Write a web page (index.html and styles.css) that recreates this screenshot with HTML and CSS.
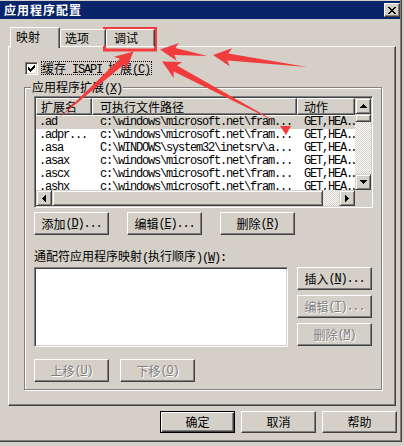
FILE: index.html
```html
<!DOCTYPE html>
<html>
<head>
<meta charset="utf-8">
<link rel="stylesheet" href="styles.css">
</head>
<body>
<div class="window">
  <div class="titlebar">
    <span class="title">应用程序配置</span>
    <span class="close"><svg width="8" height="7" viewBox="0 0 8 7" shape-rendering="crispEdges"><path d="M0 0h2v1H0zM6 0h2v1H6zM1 1h2v1H1zM5 1h2v1H5zM2 2h4v1H2zM3 3h2v1H3zM2 4h4v1H2zM1 5h2v1H1zM5 5h2v1H5zM0 6h2v1H0zM6 6h2v1H6z"/></svg></span>
  </div>
  <div class="client">
    <div class="tabs">
      <div class="tab sel">映射</div>
      <div class="tab t2">选项</div>
      <div class="tab t3">调试</div>
    </div>
    <div class="panel">
      <div class="checkrow">
        <span class="cbox"><svg width="7" height="7" viewBox="0 0 7 7" shape-rendering="crispEdges"><path d="M6 0h1v1H6zM5 1h2v1H5zM0 2h1v1H0zM4 2h3v1H4zM0 3h2v1H0zM3 3h3v1H3zM0 4h5v1H0zM1 5h3v1H1zM2 6h1v1H2z"/></svg></span>
        <span class="focus">缓存<span class="m"> ISAPI </span>扩展<span class="m">(<u>C</u>)</span></span>
      </div>
      <div class="group">
        <div class="gtitle">应用程序扩展<span class="m">(<u>X</u>)</span></div>
        <div class="list">
          <div class="lmain">
            <div class="lhead">
              <div class="hc c1">扩展名</div>
              <div class="hc c2">可执行文件路径</div>
              <div class="hc c3">动作</div>
            </div>
            <div class="lrows">
              <div class="row sel"><span class="c1">.ad</span><span class="c2">c:\windows\microsoft.net\fram...</span><span class="c3">GET,HEA<span class="dots">..</span></span></div>
              <div class="row"><span class="c1">.adpr...</span><span class="c2">c:\windows\microsoft.net\fram...</span><span class="c3">GET,HEA<span class="dots">..</span></span></div>
              <div class="row"><span class="c1">.asa</span><span class="c2">C:\WINDOWS\system32\inetsrv\a...</span><span class="c3">GET,HEA<span class="dots">..</span></span></div>
              <div class="row"><span class="c1">.asax</span><span class="c2">c:\windows\microsoft.net\fram...</span><span class="c3">GET,HEA<span class="dots">..</span></span></div>
              <div class="row"><span class="c1">.ascx</span><span class="c2">c:\windows\microsoft.net\fram...</span><span class="c3">GET,HEA<span class="dots">..</span></span></div>
              <div class="row"><span class="c1">.ashx</span><span class="c2">c:\windows\microsoft.net\fram...</span><span class="c3">GET,HEA<span class="dots">..</span></span></div>
            </div>
          </div>
          <div class="vscroll">
            <div class="sb"><svg width="7" height="4" viewBox="0 0 7 4" shape-rendering="crispEdges"><path d="M3 0h1v1H3zM2 1h3v1H2zM1 2h5v1H1zM0 3h7v1H0z"/></svg></div>
            <div class="sb vthumb"></div>
            <div class="track"></div>
            <div class="sb"><svg width="7" height="4" viewBox="0 0 7 4" shape-rendering="crispEdges"><path d="M0 0h7v1H0zM1 1h5v1H1zM2 2h3v1H2zM3 3h1v1H3z"/></svg></div>
          </div>
          <div class="hscroll">
            <div class="sb"><svg width="4" height="7" viewBox="0 0 4 7" shape-rendering="crispEdges"><path d="M3 0h1v7H3zM2 1h1v5H2zM1 2h1v3H1zM0 3h1v1H0z"/></svg></div>
            <div class="sb hthumb"></div>
            <div class="track htrack"></div>
            <div class="sb"><svg width="4" height="7" viewBox="0 0 4 7" shape-rendering="crispEdges"><path d="M0 0h1v7H0zM1 1h1v5H1zM2 2h1v3H2zM3 3h1v1H3z"/></svg></div>
          </div>
          <div class="corner"></div>
        </div>
        <div class="btnrow">
          <div class="btn">添加<span class="m">(<u>D</u>)...</span></div>
          <div class="btn">编辑<span class="m">(<u>E</u>)...</span></div>
          <div class="btn">删除<span class="m">(<u>R</u>)</span></div>
        </div>
        <div class="wlabel">通配符应用程序映射<span class="m">(</span>执行顺序<span class="m">)(<u>W</u>):</span></div>
        <div class="wrow">
          <div class="wlist"></div>
          <div class="wbtns">
            <div class="btn">插入<span class="m">(<u>N</u>)...</span></div>
            <div class="btn dis">编辑<span class="m">(<u>T</u>)...</span></div>
            <div class="btn dis">删除<span class="m">(<u>M</u>)</span></div>
          </div>
        </div>
        <div class="btnrow2">
          <div class="btn dis">上移<span class="m">(<u>U</u>)</span></div>
          <div class="btn dis">下移<span class="m">(<u>O</u>)</span></div>
        </div>
      </div>
    </div>
    <div class="footer">
      <div class="btn big def">确定</div>
      <div class="btn big">取消</div>
      <div class="btn big">帮助</div>
    </div>
  </div>
</div>
<svg class="annot" width="404" height="446" viewBox="0 0 404 446">
  <rect x="104.5" y="28.5" width="51" height="21.5" fill="none" stroke="#f03c3c" stroke-width="3"/>
  <g fill="#f03c3c">
    <polygon transform="translate(160 49.5) rotate(187.7)" points="0,0 -18,-9 -15,-3.5 -48,0 -15,3.5 -18,9"/>
    <polygon transform="translate(213 55) rotate(187.3)" points="0,0 -18,-9 -15,-3.5 -95,0 -15,3.5 -18,9"/>
    <polygon transform="translate(162 61.5) rotate(207.9)" points="0,0 -18,-9 -15,-3.5 -132,0 -15,3.5 -18,9"/>
    <polygon points="280,126 291,126 286,135"/>
    <polygon transform="translate(133.5 51.5) rotate(-41.7)" points="0,0 -18,-9 -15,-3.5 -100,0 -15,3.5 -18,9"/>
  </g>
</svg>
</body>
</html>
```

FILE: styles.css
```css
* { box-sizing: border-box; margin: 0; padding: 0; }
body {
  margin: 0;
  width: 404px;
  height: 446px;
  position: relative;
  overflow: hidden;
  background: #d4d0c8;
  font-family: "Noto Sans CJK SC", "Liberation Sans", sans-serif;
  font-size: 12px;
  line-height: 14px;
  color: #000;
}
.m { font-family: "Liberation Mono", monospace; font-size: 12px; letter-spacing: -1.2px; }
u { text-decoration: underline; }

.window {
  width: 402px;
  height: 442px;
  padding-top: 1px;
  border-right: 1px solid #404040;
  border-bottom: 1px solid #404040;
  box-shadow: inset -1px -1px 0 #808080;
}
.titlebar {
  height: 18px;
  margin-right: 1px;
  background: #0a246a;
  display: flex;
  align-items: center;
  justify-content: space-between;
  padding-left: 4px;
}
.title { color: #fff; font-weight: bold; letter-spacing: 1px; }
.close {
  width: 16px;
  height: 14px;
  background: #d4d0c8;
  border: 1px solid;
  border-color: #fff #404040 #404040 #fff;
  box-shadow: inset -1px -1px 0 #808080;
  display: flex;
  align-items: center;
  justify-content: center;
}

.client { padding-left: 8px; }
.tabs {
  display: flex;
  align-items: flex-end;
  height: 19px;
  margin-top: 8px;
  padding-left: 2px;
  position: relative;
  z-index: 1;
}
.tab {
  height: 17px;
  background: #d4d0c8;
  border-left: 1px solid #fff;
  border-top: 1px solid #fff;
  border-right: 1px solid #404040;
  box-shadow: inset -1px 0 0 #808080;
  border-radius: 2px 2px 0 0;
  line-height: 15px;
  white-space: nowrap;
}
.tab.sel { width: 50px; height: 21px; margin-bottom: -2px; padding-left: 5px; line-height: 17px; }
.tab.t2 { width: 46px; padding-left: 4px; }
.tab.t3 { width: 49px; padding-left: 7px; }

.panel {
  width: 388px;
  height: 360px;
  border: 1px solid;
  border-color: #fff #404040 #404040 #fff;
  box-shadow: inset -1px -1px 0 #808080;
  padding: 14px 0 0 16px;
}
.checkrow { display: flex; align-items: center; height: 14px; }
.cbox {
  width: 13px;
  height: 13px;
  margin-right: 3px;
  background: #fff;
  border: 1px solid;
  border-color: #808080 #fff #fff #808080;
  box-shadow: inset 1px 1px 0 #404040, inset -1px -1px 0 #d4d0c8;
  display: flex;
  align-items: center;
  justify-content: center;
}
.focus {
  border: 1px dotted #000;
  height: 14px;
  line-height: 12px;
  padding-right: 1px;
  white-space: nowrap;
}

.group {
  margin: 12px 0 0 -1px;
  width: 358px;
  border: 1px solid #808080;
  box-shadow: 1px 1px 0 #fff, inset 1px 1px 0 #fff;
  padding: 0 0 7px 9px;
}
.gtitle {
  margin: -8px 0 0 -3px;
  padding: 0 1px;
  width: fit-content;
  height: 14px;
  line-height: 14px;
  background: #d4d0c8;
  white-space: nowrap;
}

.list {
  margin-top: 2px;
  width: 339px;
  height: 112px;
  background: #fff;
  border: 1px solid;
  border-color: #808080 #fff #fff #808080;
  box-shadow: inset 1px 1px 0 #404040, inset -1px -1px 0 #d4d0c8;
  padding: 1px;
  display: grid;
  grid-template-columns: 319px 16px;
  grid-template-rows: 92px 16px;
}
.lmain { overflow: hidden; }
.lhead { display: flex; height: 17px; }
.hc {
  height: 17px;
  background: #d4d0c8;
  border: 1px solid;
  border-color: #fff #404040 #404040 #fff;
  box-shadow: inset -1px -1px 0 #808080;
  line-height: 15px;
  white-space: nowrap;
  overflow: hidden;
}
.hc.c1 { width: 56px; padding-left: 4px; }
.hc.c2 { width: 205px; padding-left: 7px; }
.hc.c3 { width: 58px; padding-left: 6px; }
.lrows { padding-top: 1px; }
.row {
  display: flex;
  height: 13px;
  line-height: 13px;
  font-family: "Liberation Mono", monospace;
  font-size: 12px;
  letter-spacing: -1.2px;
}
.row > span { white-space: nowrap; overflow: hidden; display: block; }
.row .c1 { width: 56px; padding-left: 3px; }
.row .c2 { width: 205px; padding-left: 8px; }
.row .c3 { width: 58px; padding-left: 7px; }
.row .dots { letter-spacing: -3px; }
.row.sel { background: #d4d0c8; }

.vscroll { display: flex; flex-direction: column; }
.hscroll { display: flex; }
.sb {
  width: 16px;
  height: 16px;
  flex: none;
  background: #d4d0c8;
  border: 1px solid;
  border-color: #d4d0c8 #404040 #404040 #d4d0c8;
  box-shadow: inset 1px 1px 0 #fff, inset -1px -1px 0 #808080;
  display: flex;
  align-items: center;
  justify-content: center;
}
.vthumb { height: 8px; }
.hthumb { width: auto; flex: 1; }
.track {
  flex: 1;
  background-color: #fff;
  background-image: conic-gradient(#d4d0c8 25%, #fff 0 50%, #d4d0c8 0 75%, #fff 0);
  background-size: 2px 2px;
}
.htrack { flex: none; width: 16px; }
.corner { background: #d4d0c8; }

.btn {
  width: 75px;
  height: 23px;
  flex: none;
  background: #d4d0c8;
  border: 1px solid;
  border-color: #fff #404040 #404040 #fff;
  box-shadow: inset -1px -1px 0 #808080;
  display: flex;
  align-items: center;
  justify-content: center;
  white-space: nowrap;
}
.btn.dis { color: #808080; text-shadow: 1px 1px 0 #fff; }
.btn.big { height: 22px; }
.btn.def {
  border-color: #000;
  box-shadow: inset 1px 1px 0 #fff, inset -1px -1px 0 #404040, inset -2px -2px 0 #808080;
}
.btnrow { display: flex; gap: 18px; margin-top: 4px; }
.wlabel { margin-top: 15px; height: 12px; line-height: 12px; white-space: nowrap; }
.wrow { display: flex; margin-top: 5px; }
.wlist {
  width: 254px;
  height: 80px;
  background: #fff;
  border: 1px solid;
  border-color: #808080 #fff #fff #808080;
  box-shadow: inset 1px 1px 0 #404040, inset -1px -1px 0 #d4d0c8;
}
.wbtns { margin-left: 9px; display: flex; flex-direction: column; gap: 5px; }
.btnrow2 { display: flex; gap: 11px; margin-top: 12px; }

.footer {
  display: flex;
  justify-content: flex-end;
  gap: 6px;
  width: 389px;
  margin-top: 5px;
}

.annot { position: absolute; left: 0; top: 0; pointer-events: none; }
```
